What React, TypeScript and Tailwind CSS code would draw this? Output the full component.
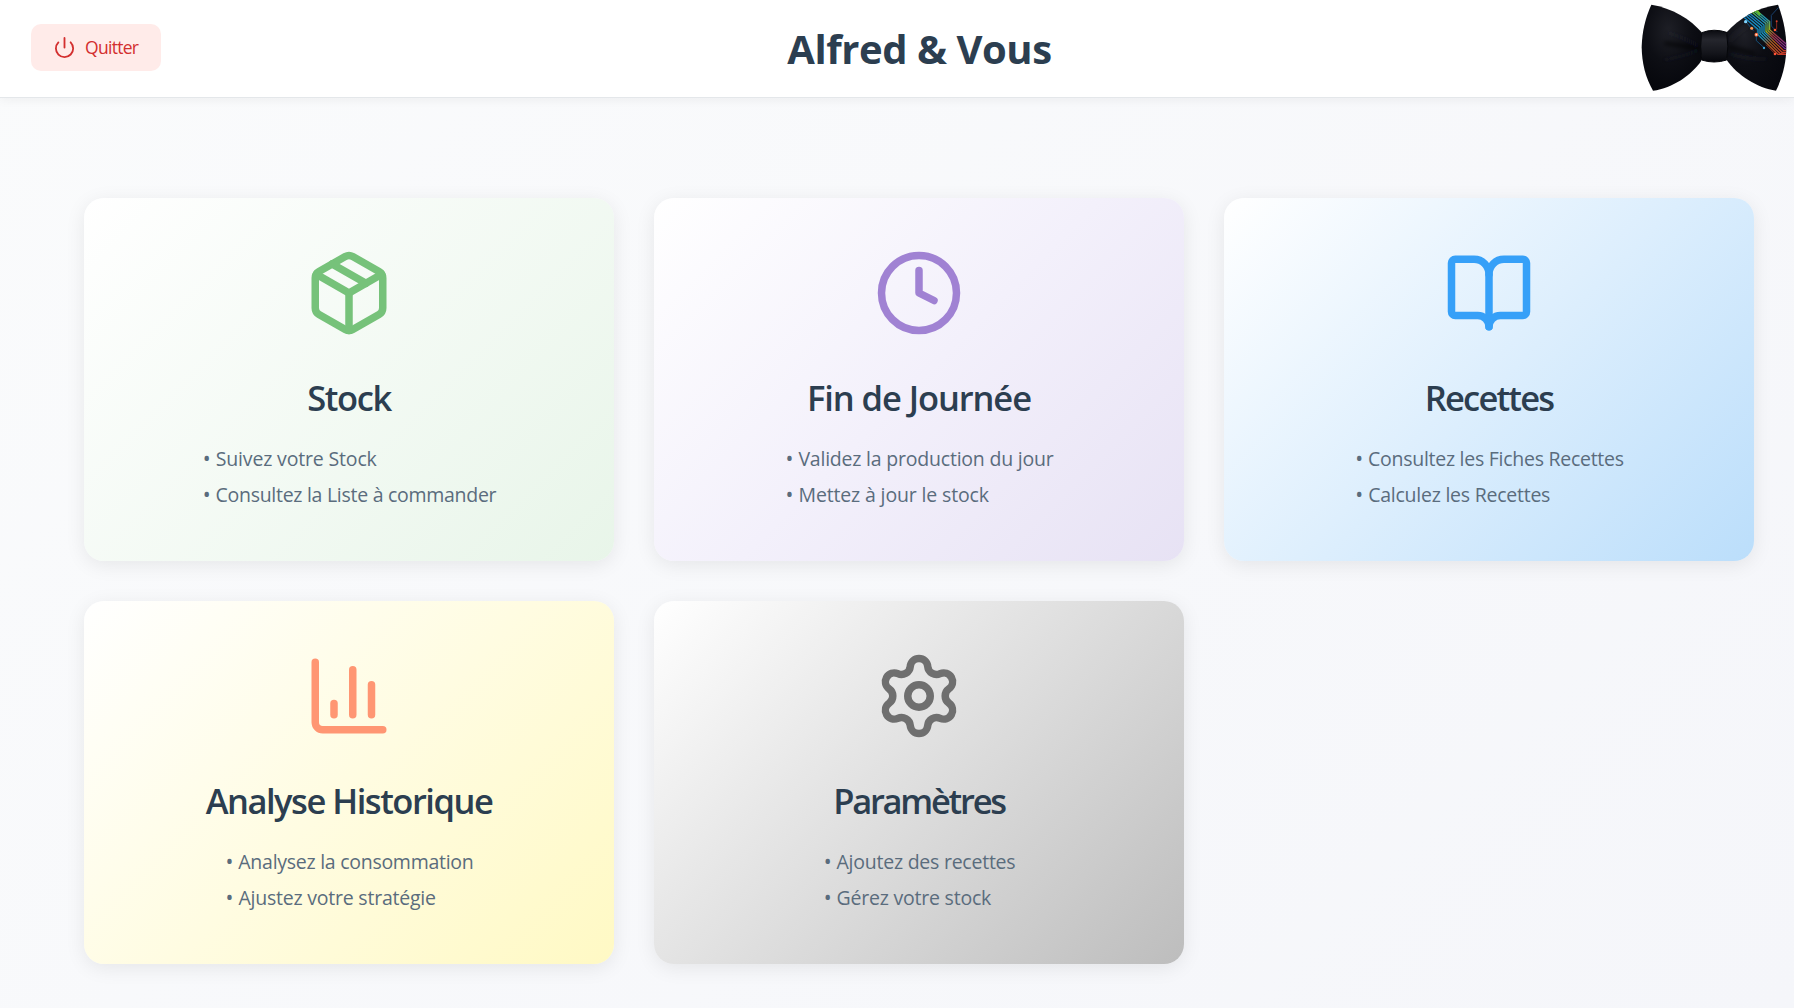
import type { ReactNode } from "react";
import { BookOpen, ChartColumn, Clock, Package, Power, Settings } from "lucide-react";

type Item = { text: string; spacing: string };

type CardProps = {
  title: string;
  titleSpacing: string;
  icon: ReactNode;
  background: string;
  items: Item[];
};

function Card({ title, titleSpacing, icon, background, items }: CardProps) {
  return (
    <section
      className={`flex h-[363px] flex-col items-center rounded-[20px] pt-[50px] shadow-[0_4px_20px_rgba(0,0,0,0.08)] ${background}`}
    >
      {icon}
      <h2
        className={`mt-[35px] text-[34.5px] leading-[50px] font-semibold whitespace-nowrap text-[#2c3e50] ${titleSpacing}`}
      >
        {title}
      </h2>
      <ul className="mt-[18px] pl-px text-[19.5px] leading-9 text-[#5a6c7d]">
        {items.map((item) => (
          <li key={item.text} className={`whitespace-nowrap ${item.spacing}`}>
            <span className="text-[21px] leading-none">• </span>
            {item.text}
          </li>
        ))}
      </ul>
    </section>
  );
}

function BowTie() {
  return (
    <svg viewBox="0 0 510 291" className="h-[97px] w-[170px]" aria-label="Alfred">
      <defs>
        <radialGradient id="leftWing" cx="0.45" cy="0.3" r="0.75">
          <stop offset="0" stopColor="#1e1f26" />
          <stop offset="0.5" stopColor="#0d0e14" />
          <stop offset="1" stopColor="#05060b" />
        </radialGradient>
        <radialGradient id="rightWing" cx="0.3" cy="0.35" r="0.8">
          <stop offset="0" stopColor="#1e1f26" />
          <stop offset="0.45" stopColor="#0c0d13" />
          <stop offset="1" stopColor="#07080e" />
        </radialGradient>
        <linearGradient id="knot" x1="0" y1="0" x2="0" y2="1">
          <stop offset="0" stopColor="#0a0b10" />
          <stop offset="0.3" stopColor="#25262d" />
          <stop offset="0.7" stopColor="#15161c" />
          <stop offset="1" stopColor="#04050a" />
        </linearGradient>
        <linearGradient id="blueTrace" gradientUnits="userSpaceOnUse" x1="370" y1="40" x2="485" y2="160">
          <stop offset="0" stopColor="#1482be" />
          <stop offset="0.5" stopColor="#1a98c0" />
          <stop offset="0.68" stopColor="#b05a1e" />
          <stop offset="1" stopColor="#c8382a" />
        </linearGradient>
        <linearGradient id="greenTrace" gradientUnits="userSpaceOnUse" x1="385" y1="30" x2="488" y2="140">
          <stop offset="0" stopColor="#5fc433" />
          <stop offset="0.3" stopColor="#1c8cb8" />
          <stop offset="0.5" stopColor="#8cb52a" />
          <stop offset="0.65" stopColor="#a03a3f" />
          <stop offset="1" stopColor="#7a2590" />
        </linearGradient>
        <filter id="soft" x="-20%" y="-50%" width="140%" height="200%">
          <feGaussianBlur stdDeviation="6" />
        </filter>
        <clipPath id="rightClip">
          <path d="M308 97C345 55 400 22 462 14C480 60 487 105 487 142C487 185 476 232 456 272C400 264 340 226 308 180Z" />
        </clipPath>
      </defs>
      <path
        d="M82 14C145 24 200 58 233 97L232 182C203 225 146 264 87 272C64 232 54 190 53 142C54 95 64 54 82 14Z"
        fill="url(#leftWing)"
      />
      <g filter="url(#soft)" fill="none" strokeLinecap="round">
        <path d="M130 98Q175 110 222 136" stroke="#2b2d35" strokeWidth="6" opacity="0.3" />
        <path d="M120 180Q170 172 222 152" stroke="#292b33" strokeWidth="6" opacity="0.35" />
        <path d="M125 130Q180 138 225 145" stroke="#010207" strokeWidth="9" opacity="0.8" />
      </g>
      <path
        d="M308 97C345 55 400 22 462 14C480 60 487 105 487 142C487 185 476 232 456 272C400 264 340 226 308 180Z"
        fill="url(#rightWing)"
      />
      <g filter="url(#soft)" fill="none" strokeLinecap="round">
        <path d="M318 120Q345 90 372 78" stroke="#34363f" strokeWidth="6" opacity="0.4" />
        <path d="M318 162Q370 180 430 176" stroke="#292b33" strokeWidth="6" opacity="0.35" />
        <path d="M318 142Q350 150 390 160" stroke="#010207" strokeWidth="9" opacity="0.8" />
      </g>
      <g clipPath="url(#rightClip)" fill="none" strokeWidth="4">
        <path d="M358 50L402 88V104L462 163H490" stroke="url(#blueTrace)" />
        <path d="M363 45L408 83V101L468 160L490 164" stroke="url(#blueTrace)" />
        <path d="M369 41L414 79V98L474 157H490" stroke="url(#blueTrace)" />
        <path d="M375 38L420 75V96L479 152H490" stroke="url(#blueTrace)" />
        <path d="M381 34L426 71V94L483 146H490" stroke="url(#greenTrace)" />
        <path d="M387 31L432 68V92L488 142" stroke="url(#greenTrace)" />
        <path d="M393 28L437 65V89L490 135" stroke="url(#greenTrace)" />
        <path d="M374 38L398 31L408 44" stroke="#62b52f" strokeWidth="7" />
        <path d="M464 22L442 46V78L460 96" stroke="#173f6b" strokeWidth="3" />
        <path d="M458 66V88" stroke="#9c2e24" strokeWidth="2.5" />
        <path d="M365 64L388 92M397 104V122L420 143" stroke="#155a8a" strokeWidth="2.5" />
        <path d="M388 80L400 92V104" stroke="#1a6b9c" strokeWidth="2" />
        <path d="M426 134L453 161" stroke="#b8321f" strokeWidth="2.5" />
      </g>
      <circle cx="365" cy="65" r="5" fill="#7fd4ff" />
      <circle cx="383" cy="85" r="4.5" fill="#ff9a55" />
      <circle cx="397" cy="104" r="5.5" fill="#ff6a3c" />
      <circle cx="397" cy="104" r="2.5" fill="#ffe3c8" />
      <circle cx="420" cy="144" r="3.5" fill="#3fa9dd" />
      <circle cx="458" cy="64" r="3" fill="#d6402c" />
      <circle cx="453" cy="90" r="4" fill="#ff5a33" />
      <circle cx="453" cy="162" r="4" fill="#ff5236" />
      <path
        d="M233 98Q270 84 308 97Q315 140 308 180Q270 192 233 180Q227 140 233 98Z"
        fill="url(#knot)"
        stroke="#05060a"
        strokeWidth="3"
      />
    </svg>
  );
}

const cards: CardProps[] = [
  {
    title: "Stock",
    titleSpacing: "tracking-[-1.4px]",
    icon: <Package size={90} className="text-[#76c27a]" />,
    background: "bg-[linear-gradient(135deg,#ffffff_0%,#e8f5e9_100%)]",
    items: [
      { text: "Suivez votre Stock", spacing: "tracking-[-0.16px]" },
      { text: "Consultez la Liste à commander", spacing: "tracking-[-0.28px]" },
    ],
  },
  {
    title: "Fin de Journée",
    titleSpacing: "tracking-[-1.08px]",
    icon: <Clock size={90} className="text-[#a082d3]" />,
    background: "bg-[linear-gradient(135deg,#ffffff_0%,#f3f0fb_50%,#e7e2f4_100%)]",
    items: [
      { text: "Validez la production du jour", spacing: "tracking-[-0.21px]" },
      { text: "Mettez à jour le stock", spacing: "tracking-[-0.15px]" },
    ],
  },
  {
    title: "Recettes",
    titleSpacing: "tracking-[-1.78px]",
    icon: <BookOpen size={90} className="text-[#36a0f8]" />,
    background: "bg-[linear-gradient(135deg,#ffffff_0%,#bbdefb_100%)]",
    items: [
      { text: "Consultez les Fiches Recettes", spacing: "tracking-[-0.27px]" },
      { text: "Calculez les Recettes", spacing: "tracking-[-0.24px]" },
    ],
  },
  {
    title: "Analyse Historique",
    titleSpacing: "tracking-[-1.48px]",
    icon: <ChartColumn size={90} className="text-[#ff9673]" />,
    background: "bg-[linear-gradient(135deg,#ffffff_0%,#fff9c4_100%)]",
    items: [
      { text: "Analysez la consommation", spacing: "tracking-[-0.27px]" },
      { text: "Ajustez votre stratégie", spacing: "tracking-[-0.22px]" },
    ],
  },
  {
    title: "Paramètres",
    titleSpacing: "tracking-[-2.25px]",
    icon: <Settings size={90} className="text-[#6f6f6f]" />,
    background: "bg-[linear-gradient(135deg,#ffffff_0%,#bdbdbd_100%)]",
    items: [
      { text: "Ajoutez des recettes", spacing: "tracking-[-0.24px]" },
      { text: "Gérez votre stock", spacing: "tracking-[-0.22px]" },
    ],
  },
];

export default function App() {
  return (
    <div className="flex h-[1008px] w-[1794px] flex-col overflow-hidden bg-[linear-gradient(135deg,#fafbfc_0%,#f5f6fa_100%)] font-['Open_Sans','Noto_Sans',sans-serif]">
      <header className="grid h-[98px] shrink-0 grid-cols-3 items-center border-b border-[#e4e7ea] bg-white shadow-[0_2px_10px_rgba(0,0,0,0.05)]">
        <button className="mb-0.5 ml-[31px] flex h-[47px] w-[130px] items-center rounded-[10px] bg-[#ffebe9] pl-[22px] text-[17.5px] tracking-[-0.7px] text-[#d32f2f]">
          <Power size={23} strokeWidth={1.9} />
          <span className="ml-[9px]">Quitter</span>
        </button>
        <h1 className="pl-[45px] text-center text-[40px] leading-none font-bold tracking-[-0.45px] whitespace-nowrap text-[#2c3e50]">
          Alfred &amp; Vous
        </h1>
        <div className="justify-self-end">
          <BowTie />
        </div>
      </header>
      <main className="mt-[100px] ml-[84px] grid w-[1670px] grid-cols-3 gap-10">
        {cards.map((card) => (
          <Card key={card.title} {...card} />
        ))}
      </main>
    </div>
  );
}
